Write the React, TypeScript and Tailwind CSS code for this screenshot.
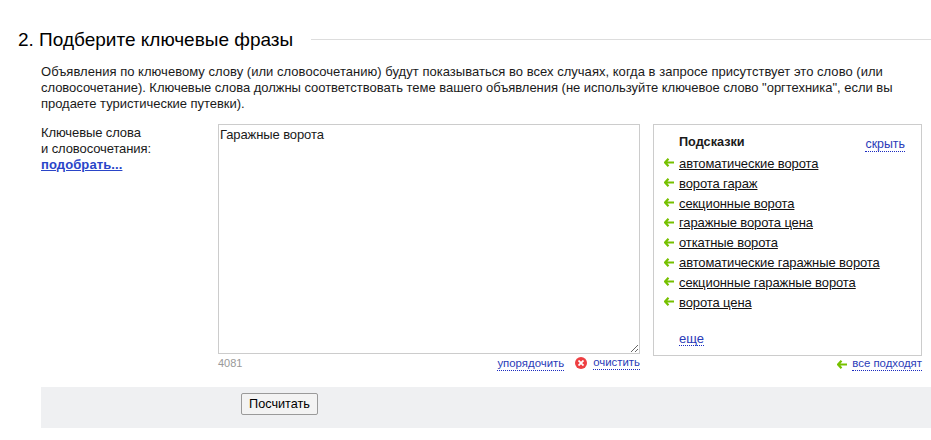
const hints = [
  "автоматические ворота",
  "ворота гараж",
  "секционные ворота",
  "гаражные ворота цена",
  "откатные ворота",
  "автоматические гаражные ворота",
  "секционные гаражные ворота",
  "ворота цена",
];

function Arrow({ className = "" }: { className?: string }) {
  return (
    <svg width="10" height="9" viewBox="0 0 10 9" className={className}>
      <path d="M4.5 0.8 L1 4.5 L4.5 8.2 M1.5 4.5 H10" fill="none" stroke="#76c100" strokeWidth="2.2" />
    </svg>
  );
}

function Dotted({ children }: { children: string }) {
  return <span className="text-[#2a3bb8] border-b border-dotted border-[#1b2bc0] leading-[13px] inline-block">{children}</span>;
}

export default function App() {
  return (
    <div className="w-[931px] h-[440px] overflow-hidden bg-white text-[#1a1a1a] font-['Liberation_Sans',Arial,sans-serif] text-[13px] leading-[16px] pt-[30px]">
      <div className="flex items-center pl-[18px] h-[20px]">
        <h2 className="text-[19px] leading-[20px] text-black whitespace-nowrap">2. Подберите ключевые фразы</h2>
        <div className="ml-[18px] flex-1 h-px bg-[#dddddd] -translate-y-[1px]" />
      </div>
      <p className="ml-[41px] mt-[14px] w-[880px] text-[13px] leading-[16px]">
        <span className="block tracking-[0.03px]">Объявления по ключевому слову (или словосочетанию) будут показываться во всех случаях, когда в запросе присутствует это слово (или</span>
        <span className="block tracking-[-0.03px]">словосочетание). Ключевые слова должны соответствовать теме вашего объявления (не используйте ключевое слово "оргтехника", если вы</span>
        <span className="block tracking-[-0.04px]">продаете туристические путевки).</span>
      </p>
      <div className="flex ml-[41px] mt-[12px]">
        <div className="w-[177px] pt-[1px] text-[13px] tracking-[-0.1px]">
          <div>Ключевые слова</div>
          <div>и словосочетания:</div>
          <div className="font-bold text-[#2a45c8] underline tracking-[0.1px]">подобрать...</div>
        </div>
        <div className="w-[422px]">
          <textarea
            defaultValue="Гаражные ворота"
            className="block w-[422px] h-[230px] border border-[#cccccc] px-[1px] py-[2px] text-[13px] tracking-[-0.1px] leading-[16px] outline-none"
          />
          <div className="flex items-center mt-[1px] h-[16px] text-[11.4px]">
            <span className="text-[#999999] text-[11px]">4081</span>
            <span className="ml-auto"><Dotted>упорядочить</Dotted></span>
            <span className="ml-[11px] mr-[6px] w-[12px] h-[12px] rounded-full bg-[#ee3f42] flex items-center justify-center">
              <svg width="6" height="6" viewBox="0 0 6 6"><path d="M0.5 0.5 L5.5 5.5 M5.5 0.5 L0.5 5.5" stroke="#ffffff" strokeWidth="1.8" /></svg>
            </span>
            <Dotted>очистить</Dotted>
          </div>
        </div>
        <div className="ml-[13px] w-[269px]">
          <div className="h-[232px] border border-[#cccccc] pl-[10px] pr-[16px] pt-[9px] relative">
            <div className="flex justify-between pl-[15px]">
              <span className="font-bold text-[12.7px] text-[#1a1a1a]">Подсказки</span>
              <span className="text-[12.4px] mt-[2px]"><Dotted>скрыть</Dotted></span>
            </div>
            <ul className="mt-[2px]">
              {hints.map((h) => (
                <li key={h} className="flex items-center h-[19.85px] text-[13px] tracking-[-0.1px]">
                  <Arrow className="mr-[5px] -translate-y-[1px]" />
                  <span className="underline text-[#111111]">{h}</span>
                </li>
              ))}
            </ul>
            <div className="mt-[18px] pl-[15px] text-[13px]"><Dotted>еще</Dotted></div>
          </div>
          <div className="flex items-center justify-end h-[16px] text-[11.4px]">
            <Arrow className="mr-[5px]" />
            <Dotted>все подходят</Dotted>
          </div>
        </div>
      </div>
      <div className="ml-[41px] mt-[15px] h-[41px] bg-[#eff0f2] pl-[200px] pt-[6px]">
        <button className="h-[22px] w-[77px] border border-[#9a9a9a] rounded-[2px] bg-[#f3f3f3] text-[12.7px] text-black">Посчитать</button>
      </div>
    </div>
  );
}
